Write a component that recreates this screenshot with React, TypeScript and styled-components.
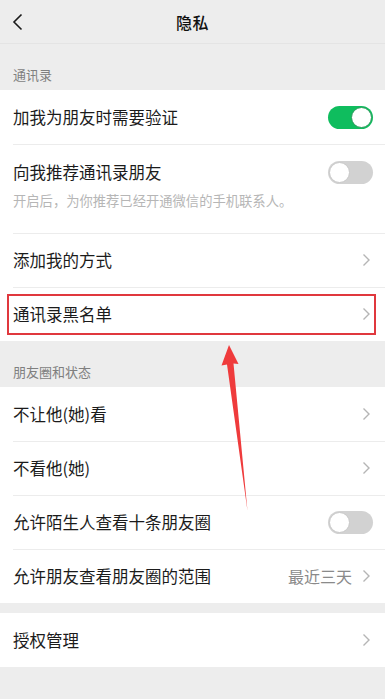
import React from "react";
import styled, { createGlobalStyle } from "styled-components";

const Global = createGlobalStyle`
  html, body { margin: 0; padding: 0; background: #ededed; }
  body { font-family: "Noto Sans CJK SC", "Noto Sans", sans-serif; -webkit-font-smoothing: antialiased; }
`;

const Page = styled.div`
  position: relative;
  width: 385px;
  min-height: 699px;
  background: #ededed;
  overflow: hidden;
`;

const Header = styled.header`
  height: 43px;
  display: flex;
  align-items: center;
  justify-content: center;
  position: relative;
  border-bottom: 1px solid #e4e4e4;
`;

const BackBtn = styled.div`
  position: absolute;
  left: 11px;
  top: 13px;
  width: 14px;
  height: 18px;
  display: flex;
`;

const Title = styled.h1`
  margin: 0;
  font-size: 16px;
  font-weight: 500;
  color: #111;
  letter-spacing: 0.5px;
`;

const SectionLabel = styled.div<{ $h: number }>`
  height: ${(p) => p.$h}px;
  box-sizing: border-box;
  display: flex;
  align-items: flex-end;
  padding: 0 0 7px 13px;
  font-size: 13px;
  line-height: 17px;
  color: #7f7f7f;
`;

const Group = styled.section`
  background: #fff;
`;

const Gap = styled.div<{ $h: number }>`
  height: ${(p) => p.$h}px;
`;

const Row = styled.div<{ $first?: boolean }>`
  position: relative;
  height: 54px;
  box-sizing: border-box;
  display: flex;
  align-items: center;
  padding: 0 14px 0 13px;
  ${(p) =>
    p.$first
      ? ""
      : `&::before {
    content: "";
    position: absolute;
    left: 13px;
    right: 0;
    top: 0;
    height: 1px;
    background: #ececec;
  }`}
`;

const TallRow = styled.div`
  position: relative;
  padding: 16px 14px 23px 13px;
  box-sizing: border-box;
  height: 89px;
  &::before {
    content: "";
    position: absolute;
    left: 13px;
    right: 0;
    top: 0;
    height: 1px;
    background: #ececec;
  }
`;

const TitleLine = styled.div`
  display: flex;
  align-items: center;
  height: 24px;
`;

const Label = styled.span`
  flex: 1;
  font-size: 16.5px;
  line-height: 24px;
  color: #1b1b1b;
  white-space: nowrap;
`;

const Sub = styled.div`
  margin-top: 8px;
  font-size: 13.3px;
  line-height: 18px;
  color: #b6b6b6;
  white-space: nowrap;
`;

const Value = styled.span`
  font-size: 16px;
  color: #8a8a8a;
  margin-right: 10px;
`;

const Toggle = styled.div<{ $on?: boolean }>`
  position: relative;
  width: 45px;
  height: 23px;
  border-radius: 12px;
  background: ${(p) => (p.$on ? "#0fbd5e" : "#d2d2d2")};
  flex-shrink: 0;
  margin-right: -2px;
  &::after {
    content: "";
    position: absolute;
    top: 1px;
    ${(p) => (p.$on ? "right: 1px;" : "left: 1px;")}
    width: 19px;
    height: 19px;
    border-radius: 50%;
    background: #fff;
    border: 1px solid ${(p) => (p.$on ? "#2c9a5c" : "#c8c8c8")};
    box-sizing: content-box;
  }
`;

const Highlight = styled.div`
  position: absolute;
  left: 7px;
  right: 9px;
  top: 7px;
  bottom: 6px;
  border: 2.5px solid #e0383e;
  pointer-events: none;
`;

const ArrowLayer = styled.svg`
  position: absolute;
  left: 0;
  top: 0;
  pointer-events: none;
`;

const Chevron = () => (
  <svg width="9" height="14" viewBox="0 0 9 14" style={{ flexShrink: 0 }}>
    <path d="M1.5 1.5 L7 7 L1.5 12.5" fill="none" stroke="#b5b5b5" strokeWidth="1.4" />
  </svg>
);

const BackIcon = () => (
  <svg width="14" height="18" viewBox="0 0 14 18">
    <path d="M10.5 1.5 L3 9 L10.5 16.5" fill="none" stroke="#1a1a1a" strokeWidth="1.6" />
  </svg>
);

export default function App() {
  return (
    <Page>
      <Global />
      <Header>
        <BackBtn>
          <BackIcon />
        </BackBtn>
        <Title>隐私</Title>
      </Header>

      <SectionLabel $h={46}>通讯录</SectionLabel>
      <Group>
        <Row $first>
          <Label>加我为朋友时需要验证</Label>
          <Toggle $on />
        </Row>
        <TallRow>
          <TitleLine>
            <Label>向我推荐通讯录朋友</Label>
            <Toggle />
          </TitleLine>
          <Sub>开启后，为你推荐已经开通微信的手机联系人。</Sub>
        </TallRow>
        <Row>
          <Label>添加我的方式</Label>
          <Chevron />
        </Row>
        <Row>
          <Label>通讯录黑名单</Label>
          <Chevron />
          <Highlight />
        </Row>
      </Group>

      <SectionLabel $h={46}>朋友圈和状态</SectionLabel>
      <Group>
        <Row $first>
          <Label>不让他(她)看</Label>
          <Chevron />
        </Row>
        <Row>
          <Label>不看他(她)</Label>
          <Chevron />
        </Row>
        <Row>
          <Label>允许陌生人查看十条朋友圈</Label>
          <Toggle />
        </Row>
        <Row>
          <Label>允许朋友查看朋友圈的范围</Label>
          <Value>最近三天</Value>
          <Chevron />
        </Row>
      </Group>

      <Gap $h={10} />
      <Group>
        <Row $first>
          <Label>授权管理</Label>
          <Chevron />
        </Row>
      </Group>

      <ArrowLayer width="385" height="699" viewBox="0 0 385 699">
        <polygon
          points="229,345 238.5,364 233.5,363.5 247.5,511 227,364.5 221.5,365.5"
          fill="#ef3b3c"
        />
      </ArrowLayer>
    </Page>
  );
}
